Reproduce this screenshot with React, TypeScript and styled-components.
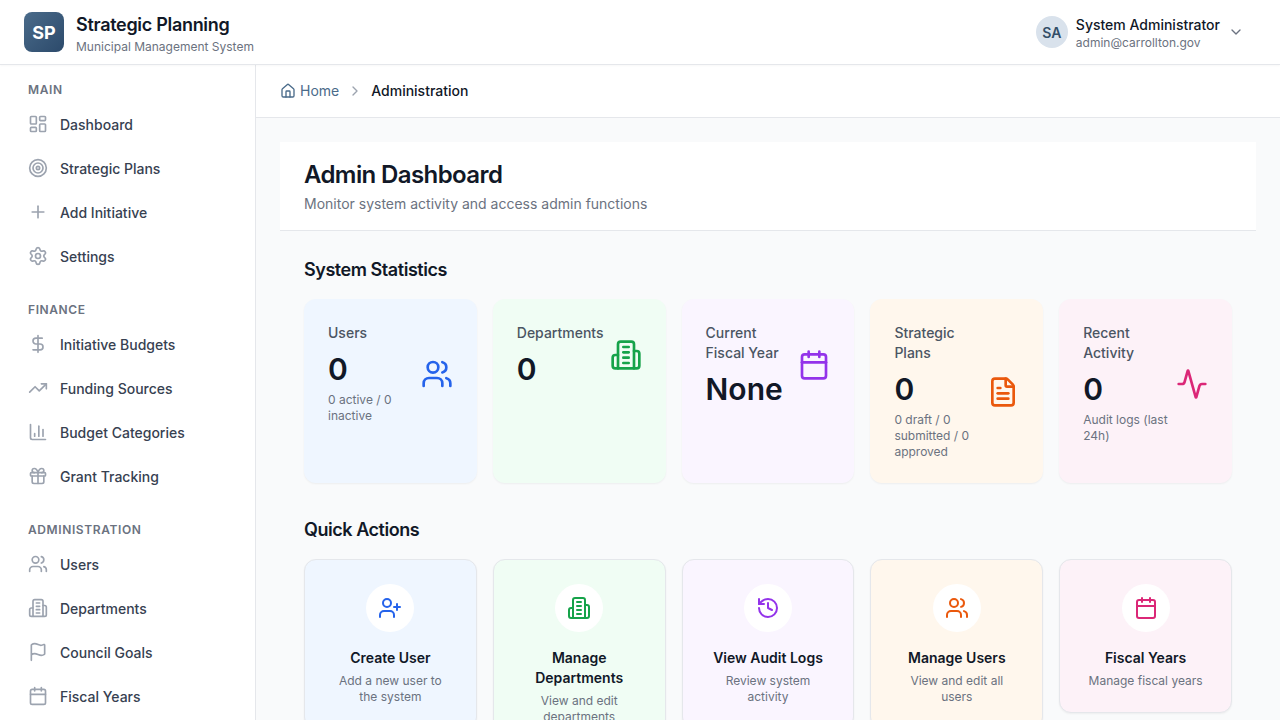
import React from 'react';
import styled, { createGlobalStyle } from 'styled-components';
import {
  LayoutDashboard, Target, Plus, Settings, DollarSign, TrendingUp, ChartColumn, Gift, Users, Flag,
  Calendar, House, ChevronDown, ChevronRight, FileText, Activity, UserPlus, History, LucideProps,
} from 'lucide-react';

const Global = createGlobalStyle`
  html, body { margin: 0; padding: 0; height: 100%; overflow: hidden; }
  body { font-family: Inter, "Liberation Sans", sans-serif; background: #f9fafb; color: #111827; }
  * { box-sizing: border-box; }
`;

const Building = ({ size = 24, strokeWidth = 2, ...rest }: LucideProps) => (
  <svg width={size} height={size} viewBox="0 0 24 24" fill="none" stroke="currentColor" strokeWidth={strokeWidth} strokeLinecap="round" strokeLinejoin="round" {...rest}>
    <path d="M6 22V4a2 2 0 0 1 2-2h8a2 2 0 0 1 2 2v18Z" />
    <path d="M6 12H4a2 2 0 0 0-2 2v6a2 2 0 0 0 2 2h2" />
    <path d="M18 9h2a2 2 0 0 1 2 2v9a2 2 0 0 1-2 2h-2" />
    <path d="M10 6h4" /><path d="M10 10h4" /><path d="M10 14h4" /><path d="M10 18h4" />
  </svg>
);

const Shell = styled.div`
  height: 100vh;
  display: flex;
  flex-direction: column;
  overflow: hidden;
`;
const TopBar = styled.header`
  height: 65px;
  flex: none;
  background: #fff;
  border-bottom: 1px solid #e5e7eb;
  box-shadow: 0 1px 2px rgba(0, 0, 0, 0.03);
  display: flex;
  align-items: center;
  justify-content: space-between;
  padding: 0 24px;
  position: relative;
`;
const Brand = styled.div`
  display: flex;
  align-items: center;
  gap: 12px;
`;
const Logo = styled.div`
  width: 40px;
  height: 40px;
  border-radius: 8px;
  background: linear-gradient(135deg, #4a6b8a, #2c4a6b);
  color: #fff;
  font-size: 18px;
  font-weight: 700;
  display: flex;
  align-items: center;
  justify-content: center;
`;
const HeadText = styled.div`
  padding-top: 2px;
`;
const BrandTitle = styled.div`
  font-size: 18px;
  line-height: 28px;
  font-weight: 600;
  letter-spacing: -0.3px;
  color: #111827;
`;
const BrandSub = styled.div`
  font-size: 12px;
  line-height: 16px;
  color: #6b7280;
`;
const UserMenu = styled.div`
  display: flex;
  align-items: center;
  gap: 8px;
  padding: 0 12px;
  color: #6b7280;
`;
const Avatar = styled.div`
  width: 32px;
  height: 32px;
  border-radius: 50%;
  background: #d9e2ec;
  color: #334e68;
  font-size: 14px;
  font-weight: 600;
  display: flex;
  align-items: center;
  justify-content: center;
`;
const UserName = styled.div`
  font-size: 14px;
  line-height: 20px;
  font-weight: 500;
  color: #111827;
`;
const UserMail = styled.div`
  font-size: 12px;
  line-height: 16px;
  color: #6b7280;
`;
const Body = styled.div`
  flex: 1;
  display: flex;
  min-height: 0;
`;
const Sidebar = styled.nav`
  width: 256px;
  flex: none;
  background: #fff;
  border-right: 1px solid #e5e7eb;
  padding: 16px 0;
  display: flex;
  flex-direction: column;
  gap: 23px;
  overflow: hidden;
`;
const SideSection = styled.div`
  display: flex;
  flex-direction: column;
`;
const SideLabel = styled.div`
  font-size: 12px;
  line-height: 18px;
  font-weight: 600;
  letter-spacing: 0.6px;
  text-transform: uppercase;
  color: #6b7280;
  padding: 0 28px;
  margin-bottom: 3px;
`;
const SideItem = styled.a`
  height: 44px;
  flex: none;
  display: flex;
  align-items: center;
  gap: 12px;
  padding: 0 28px;
  font-size: 14px;
  font-weight: 500;
  color: #374151;
  svg { color: #9ca3af; flex: none; }
`;
const Main = styled.main`
  flex: 1;
  min-width: 0;
  overflow: hidden;
`;
const Crumbs = styled.div`
  height: 53px;
  background: #fff;
  border-bottom: 1px solid #e5e7eb;
  display: flex;
  align-items: center;
  padding: 0 24px;
  font-size: 14px;
  line-height: 20px;
`;
const CrumbHome = styled.a`
  display: flex;
  align-items: center;
  gap: 4px;
  color: #4a6b8a;
`;
const CrumbSep = styled(ChevronRight)`
  color: #9ca3af;
  margin: 0 8px;
`;
const CrumbCurrent = styled.span`
  color: #111827;
  font-weight: 500;
`;
const Content = styled.div`
  padding: 24px;
`;
const PageHead = styled.div`
  background: #fff;
  border-bottom: 1px solid #e5e7eb;
  padding: 16px 24px;
`;
const PageTitle = styled.h1`
  margin: 0 0 4px;
  padding-top: 1px;
  height: 32px;
  font-size: 24px;
  line-height: 32px;
  font-weight: 600;
  letter-spacing: -0.025em;
  color: #111827;
`;
const PageSub = styled.p`
  margin: 0;
  font-size: 14px;
  line-height: 20px;
  color: #6b7280;
`;
const Panel = styled.div`
  padding: 24px 24px 0;
`;
const SectionTitle = styled.h2`
  margin: 0 0 15px;
  padding-top: 1px;
  font-size: 18px;
  line-height: 28px;
  font-weight: 600;
  letter-spacing: -0.45px;
  color: #111827;
`;
const Grid = styled.div`
  display: grid;
  grid-template-columns: repeat(5, minmax(0, 1fr));
  gap: 16px;
  margin-bottom: 32px;
`;
const StatCard = styled.div<{ $bg: string }>`
  background: ${p => p.$bg};
  border-radius: 12px;
  box-shadow: 0 1px 2px rgba(0, 0, 0, 0.05);
  padding: 24px 24px 23px;
  display: flex;
  align-items: flex-start;
`;
const StatRow = styled.div`
  flex: 1;
  min-width: 0;
  display: flex;
  align-items: center;
  justify-content: space-between;
`;
const StatText = styled.div`
  min-width: 0;
`;
const StatLabel = styled.div`
  font-size: 14px;
  line-height: 20px;
  font-weight: 500;
  color: #4b5563;
  margin-bottom: 8px;
`;
const StatValue = styled.div`
  font-size: 30px;
  line-height: 36px;
  font-weight: 600;
  color: #111827;
`;
const StatNote = styled.div`
  font-size: 12px;
  line-height: 16px;
  color: #6b7280;
  margin-top: 5px;
`;
const StatIcon = styled.div<{ $color: string }>`
  flex: none;
  width: 32px;
  height: 32px;
  color: ${p => p.$color};
`;
const ActionGrid = styled(Grid)`
  align-items: start;
`;
const ActionCard = styled.div<{ $bg: string }>`
  background: ${p => p.$bg};
  border: 1px solid #e5e7eb;
  border-radius: 12px;
  box-shadow: 0 1px 2px rgba(0, 0, 0, 0.05);
  padding: 24px 24px 23px;
  display: flex;
  flex-direction: column;
  align-items: center;
  text-align: center;
`;
const ActionIcon = styled.div<{ $color: string }>`
  width: 48px;
  height: 48px;
  border-radius: 50%;
  background: #fff;
  color: ${p => p.$color};
  display: flex;
  align-items: center;
  justify-content: center;
  margin-bottom: 16px;
`;
const ActionTitle = styled.div`
  font-size: 14px;
  line-height: 20px;
  font-weight: 600;
  color: #111827;
  margin-bottom: 5px;
`;
const ActionText = styled.div`
  font-size: 12px;
  line-height: 16px;
  color: #6b7280;
`;

const nav = [
  { title: 'Main', items: [['Dashboard', LayoutDashboard], ['Strategic Plans', Target], ['Add Initiative', Plus], ['Settings', Settings]] },
  { title: 'Finance', items: [['Initiative Budgets', DollarSign], ['Funding Sources', TrendingUp], ['Budget Categories', ChartColumn], ['Grant Tracking', Gift]] },
  { title: 'Administration', items: [['Users', Users], ['Departments', Building], ['Council Goals', Flag], ['Fiscal Years', Calendar]] },
] as { title: string; items: [string, React.ComponentType<LucideProps>][] }[];

const stats = [
  { label: 'Users', value: '0', note: '0 active / 0 inactive', bg: '#eff6ff', color: '#2563eb', Icon: Users },
  { label: 'Departments', value: '0', bg: '#f0fdf4', color: '#16a34a', Icon: Building },
  { label: 'Current Fiscal Year', value: 'None', bg: '#faf5ff', color: '#9333ea', Icon: Calendar },
  { label: 'Strategic Plans', value: '0', note: '0 draft / 0 submitted / 0 approved', bg: '#fff7ed', color: '#ea580c', Icon: FileText },
  { label: 'Recent Activity', value: '0', note: 'Audit logs (last 24h)', bg: '#fdf2f8', color: '#db2777', Icon: Activity },
] as { label: string; value: string; note?: string; bg: string; color: string; Icon: React.ComponentType<LucideProps> }[];

const actions = [
  { title: 'Create User', text: 'Add a new user to the system', bg: '#eff6ff', color: '#2563eb', Icon: UserPlus },
  { title: 'Manage Departments', text: 'View and edit departments', bg: '#f0fdf4', color: '#16a34a', Icon: Building },
  { title: 'View Audit Logs', text: 'Review system activity', bg: '#faf5ff', color: '#9333ea', Icon: History },
  { title: 'Manage Users', text: 'View and edit all users', bg: '#fff7ed', color: '#ea580c', Icon: Users },
  { title: 'Fiscal Years', text: 'Manage fiscal years', bg: '#fdf2f8', color: '#db2777', Icon: Calendar },
] as { title: string; text: string; bg: string; color: string; Icon: React.ComponentType<LucideProps> }[];

export default function App() {
  return (
    <Shell>
      <Global />
      <TopBar>
        <Brand>
          <Logo>SP</Logo>
          <HeadText>
            <BrandTitle>Strategic Planning</BrandTitle>
            <BrandSub>Municipal Management System</BrandSub>
          </HeadText>
        </Brand>
        <UserMenu>
          <Avatar>SA</Avatar>
          <HeadText>
            <UserName>System Administrator</UserName>
            <UserMail>admin@carrollton.gov</UserMail>
          </HeadText>
          <ChevronDown size={16} />
        </UserMenu>
      </TopBar>
      <Body>
        <Sidebar>
          {nav.map(s => (
            <SideSection key={s.title}>
              <SideLabel>{s.title}</SideLabel>
              {s.items.map(([name, Icon]) => (
                <SideItem key={name}>
                  <Icon size={20} />
                  {name}
                </SideItem>
              ))}
            </SideSection>
          ))}
        </Sidebar>
        <Main>
          <Crumbs>
            <CrumbHome><House size={16} />Home</CrumbHome>
            <CrumbSep size={16} />
            <CrumbCurrent>Administration</CrumbCurrent>
          </Crumbs>
          <Content>
            <PageHead>
              <PageTitle>Admin Dashboard</PageTitle>
              <PageSub>Monitor system activity and access admin functions</PageSub>
            </PageHead>
            <Panel>
              <SectionTitle>System Statistics</SectionTitle>
              <Grid>
                {stats.map(s => (
                  <StatCard key={s.label} $bg={s.bg}>
                    <StatRow>
                      <StatText>
                        <StatLabel>{s.label}</StatLabel>
                        <StatValue>{s.value}</StatValue>
                        {s.note && <StatNote>{s.note}</StatNote>}
                      </StatText>
                      <StatIcon $color={s.color}><s.Icon size={32} /></StatIcon>
                    </StatRow>
                  </StatCard>
                ))}
              </Grid>
              <SectionTitle>Quick Actions</SectionTitle>
              <ActionGrid>
                {actions.map(a => (
                  <ActionCard key={a.title} $bg={a.bg}>
                    <ActionIcon $color={a.color}><a.Icon size={24} /></ActionIcon>
                    <ActionTitle>{a.title}</ActionTitle>
                    <ActionText>{a.text}</ActionText>
                  </ActionCard>
                ))}
              </ActionGrid>
            </Panel>
          </Content>
        </Main>
      </Body>
    </Shell>
  );
}
